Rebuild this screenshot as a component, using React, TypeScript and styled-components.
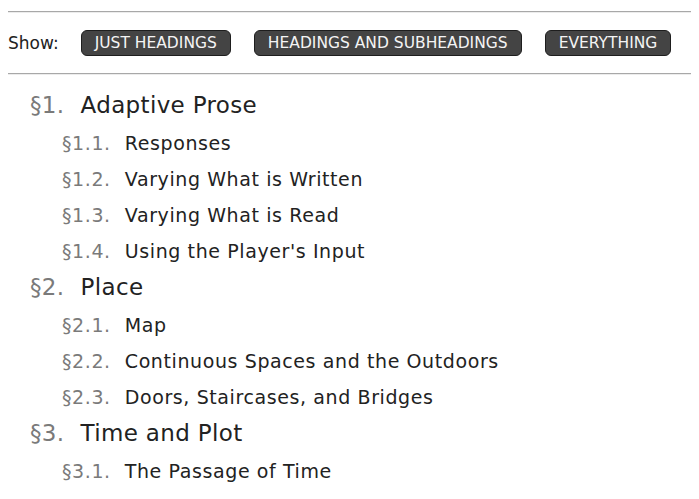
import React from "react";
import { styled, createGlobalStyle } from "styled-components";

const GlobalStyle = createGlobalStyle`
  body {
    margin: 8px;
    background: #fff;
    font-family: "Lucida Grande", "DejaVu Sans", sans-serif;
    color: #222;
  }
`;

const Rule = styled.hr<{ $top?: number }>`
  border: none;
  border-top: 1px solid #a8a8a8;
  border-bottom: 1px solid #ececec;
  margin: ${({ $top }) => $top ?? 0}px 0 0;
`;

const Toolbar = styled.div`
  display: flex;
  align-items: center;
  gap: 23px;
  height: 60px;
`;

const ShowLabel = styled.span`
  font-size: 17px;
  color: #222;
  margin-right: -1px;
`;

const ToggleButton = styled.button`
  font-family: inherit;
  font-size: 15.5px;
  text-transform: uppercase;
  color: #f4f4f4;
  background: #444;
  border: 1px solid #1e1e1e;
  border-radius: 6px;
  height: 26px;
  padding: 0 13px;
  line-height: 24px;
  cursor: pointer;
`;

const Contents = styled.ul`
  list-style: none;
  margin: 12px 0 0;
  padding: 0;
`;

const Entry = styled.li<{ $level: number }>`
  display: flex;
  align-items: center;
  height: 36px;
  padding-left: ${({ $level }) => ($level === 1 ? 22 : 54)}px;
  margin-bottom: ${({ $level }) => ($level === 1 ? 2 : 0)}px;
  font-size: ${({ $level }) => ($level === 1 ? 23 : 19)}px;
  letter-spacing: ${({ $level }) => ($level === 1 ? 0.35 : 0.6)}px;
  white-space: nowrap;
`;

const Number = styled.span<{ $level: number }>`
  color: #7a7a7a;
  margin-right: ${({ $level }) => ($level === 1 ? 16 : 14)}px;
`;

const Title = styled.span`
  color: #222;
`;

const sections: { num: string; title: string; level: number }[] = [
  { num: "§1.", title: "Adaptive Prose", level: 1 },
  { num: "§1.1.", title: "Responses", level: 2 },
  { num: "§1.2.", title: "Varying What is Written", level: 2 },
  { num: "§1.3.", title: "Varying What is Read", level: 2 },
  { num: "§1.4.", title: "Using the Player's Input", level: 2 },
  { num: "§2.", title: "Place", level: 1 },
  { num: "§2.1.", title: "Map", level: 2 },
  { num: "§2.2.", title: "Continuous Spaces and the Outdoors", level: 2 },
  { num: "§2.3.", title: "Doors, Staircases, and Bridges", level: 2 },
  { num: "§3.", title: "Time and Plot", level: 1 },
  { num: "§3.1.", title: "The Passage of Time", level: 2 },
];

const App: React.FC = () => {
  return (
    <>
      <GlobalStyle />
      <Rule $top={3} />
      <Toolbar>
        <ShowLabel>Show:</ShowLabel>
        <ToggleButton>Just headings</ToggleButton>
        <ToggleButton>Headings and subheadings</ToggleButton>
        <ToggleButton>Everything</ToggleButton>
      </Toolbar>
      <Rule />
      <Contents>
        {sections.map((s) => (
          <Entry key={s.num} $level={s.level}>
            <Number $level={s.level}>{s.num}</Number>
            <Title>{s.title}</Title>
          </Entry>
        ))}
      </Contents>
    </>
  );
};

export default App;
